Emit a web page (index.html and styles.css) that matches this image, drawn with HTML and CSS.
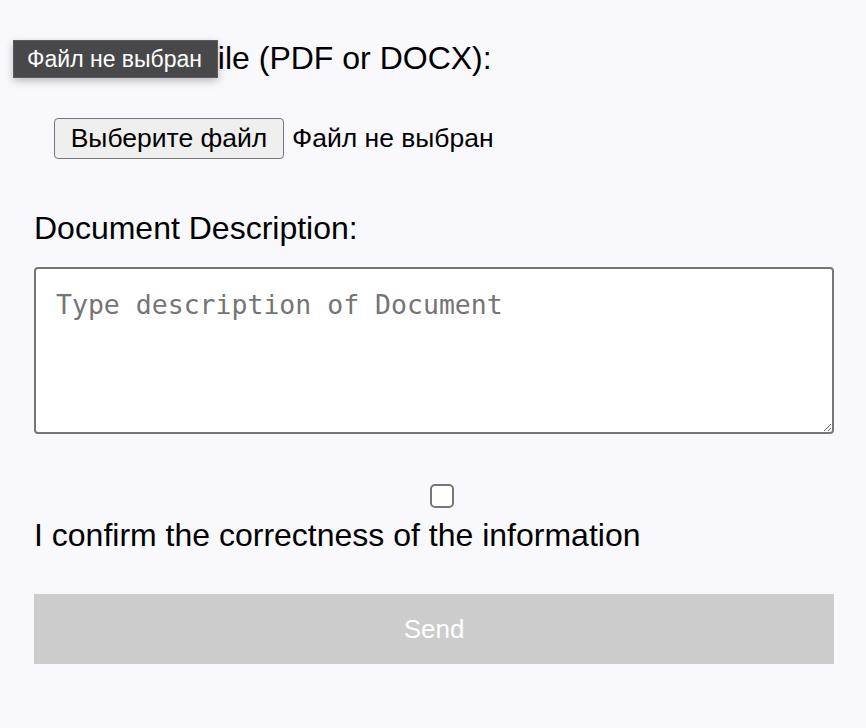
FILE: index.html
```html
<!DOCTYPE html>
<html lang="en">
<head>
<meta charset="utf-8">
<title>Upload</title>
<link rel="stylesheet" href="styles.css">
</head>
<body>
<form class="form">
  <label class="label label-file">Upload File (PDF or DOCX):</label>
  <div class="file-row">
    <button type="button" class="file-btn">Выберите файл</button>
    <span class="file-name">Файл не выбран</span>
  </div>
  <label class="label label-desc" for="desc">Document Description:</label>
  <textarea id="desc" class="desc" placeholder="Type description of Document"></textarea>
  <input type="checkbox" class="check" id="confirm">
  <label class="label label-confirm" for="confirm">I confirm the correctness of the information</label>
  <button type="button" class="send" disabled>Send</button>
  <div class="tooltip">Файл не выбран</div>
</form>
</body>
</html>
```
FILE: styles.css
```css
html, body {
  margin: 0;
  padding: 0;
  background: #f8f8fd;
}
body {
  font-family: "Liberation Sans", Arial, sans-serif;
  color: #000;
}
.form {
  position: relative;
  display: flex;
  flex-direction: column;
  padding: 0 32px 0 34px;
}
.label {
  display: block;
  font-size: 32px;
  line-height: 36px;
}
.label-file {
  margin-top: 40px;
  margin-left: 54px;
}
.file-row {
  display: flex;
  align-items: center;
  margin-top: 42px;
  margin-left: 20px;
}
.file-btn {
  height: 41px;
  width: 230px;
  padding: 0;
  border: 1px solid #767676;
  border-radius: 4px;
  background: #efefef;
  font-family: "Liberation Sans", Arial, sans-serif;
  font-size: 26.5px;
  color: #000;
}
.file-name {
  margin-left: 8px;
  font-size: 26.5px;
}
.label-desc {
  margin-top: 51px;
}
.desc {
  margin-top: 21px;
  height: 167px;
  box-sizing: border-box;
  border: 2px solid #767676;
  border-radius: 4px;
  background: #fff;
  padding: 20px 20px 16px;
  font-family: "DejaVu Sans Mono", monospace;
  font-size: 26.5px;
  resize: vertical;
}
.desc::placeholder {
  color: #757575;
}
.check {
  appearance: none;
  -webkit-appearance: none;
  align-self: center;
  width: 24px;
  height: 24px;
  margin: 50px 0 0 16px;
  box-sizing: border-box;
  border: 2px solid #767676;
  border-radius: 5px;
  background: #fff;
}
.label-confirm {
  margin-top: 9px;
}
.send {
  margin-top: 41px;
  height: 70px;
  border: none;
  background: #cccccc;
  color: #fff;
  font-family: "Liberation Sans", Arial, sans-serif;
  font-size: 26px;
}
.tooltip {
  position: absolute;
  left: 13px;
  top: 40px;
  height: 38px;
  width: 205px;
  box-sizing: border-box;
  background: #48484a;
  color: #fff;
  font-size: 23px;
  line-height: 37px;
  padding-left: 13px;
  border: 1px solid #5c5c5e;
  box-shadow: 0 3px 8px rgba(0, 0, 0, 0.25);
}
```
